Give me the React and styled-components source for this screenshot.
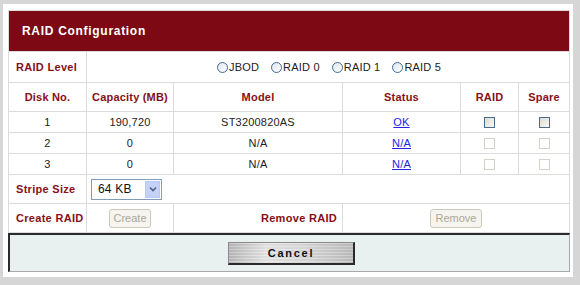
import React from "react";
import styled, { createGlobalStyle } from "styled-components";

const GlobalStyle = createGlobalStyle`
  body {
    margin: 0;
    background: #d6d6d6;
    font-family: "Liberation Sans", Arial, sans-serif;
    font-size: 11px;
    color: #222;
  }
`;

const Panel = styled.div`
  margin: 4px 0 0 3px;
  width: 570px;
  box-sizing: border-box;
  background: #fff;
  padding: 6px 3px 5px 5px;
`;

const Grid = styled.table`
  width: 100%;
  border-collapse: separate;
  border-spacing: 1px;
  background: #dcdcdc;
  table-layout: fixed;
`;

const TitleCell = styled.td`
  height: 40px;
  padding: 0 0 0 13px;
  background: #7c0913;
  color: #fff;
  font-size: 12px;
  font-weight: bold;
  letter-spacing: 0.7px;
`;

const Cell = styled.td`
  height: ${(p) => p.$h || 20}px;
  padding: 0;
  background: #fff;
  text-align: ${(p) => p.$align || "center"};
  vertical-align: middle;
  letter-spacing: 0.2px;
`;

const Label = styled(Cell)`
  padding-left: ${(p) => (p.$align === "right" ? 0 : 7)}px;
  padding-right: ${(p) => (p.$align === "right" ? 5 : 0)}px;
  color: #861019;
  font-weight: bold;
  letter-spacing: 0.3px;
`;

const Head = styled(Cell)`
  color: #861019;
  font-weight: bold;
`;

const Radios = styled.div`
  display: flex;
  justify-content: center;
  gap: 12px;
  padding-left: 2px;
`;

const RadioItem = styled.label`
  display: flex;
  align-items: center;
  gap: 1px;
  color: #222;
`;

const RadioDot = styled.span`
  width: 9px;
  height: 9px;
  border-radius: 50%;
  border: 1px solid #3f6c98;
  background: linear-gradient(135deg, #dfe6ee, #fff);
`;

const Link = styled.a`
  color: #2323e6;
  text-decoration: underline;
`;

const Check = styled.span`
  display: inline-block;
  vertical-align: middle;
  width: 9px;
  height: 9px;
  border: 1px solid ${(p) => (p.$off ? "#d4d2c8" : "#4a6c8c")};
  background: ${(p) =>
    p.$off ? "#fff" : "linear-gradient(135deg, #dcdcd6, #f8f8f6)"};
`;

const SelectBox = styled.div`
  display: flex;
  align-items: center;
  justify-content: space-between;
  width: 71px;
  height: 21px;
  margin-left: 4px;
  box-sizing: border-box;
  border: 1px solid #7f9db9;
  padding: 0 1px 0 6px;
  font-size: 12px;
  color: #111;
`;

const Arrow = styled.span`
  display: flex;
  align-items: center;
  justify-content: center;
  width: 15px;
  height: 17px;
  background: #c4d2f8;
  border: 1px solid #b7c9f1;
  box-sizing: border-box;
`;

const GhostButton = styled.button`
  width: ${(p) => p.$w}px;
  height: 19px;
  padding: 0;
  border: 1px solid #cac8bb;
  border-radius: 3px;
  background: #f5f4ee;
  color: #aca899;
  font-family: inherit;
  font-size: 11px;
`;

const Footer = styled.div`
  display: flex;
  justify-content: center;
  align-items: center;
  height: 39px;
  box-sizing: border-box;
  background: #e9f1f0;
  border-top: 2px solid #2b2b2b;
  border-left: 2px solid #2b2b2b;
  border-right: 1px solid #a9a9a9;
  border-bottom: 1px solid #a9a9a9;
  padding-left: 4px;
`;

const CancelButton = styled.button`
  width: 127px;
  height: 23px;
  padding: 0;
  border: 1px solid #8a8a8a;
  border-right: 2px solid #2a2a2a;
  border-bottom: 2px solid #2a2a2a;
  background: repeating-linear-gradient(
      180deg,
      rgba(255, 255, 255, 0.25) 0 1px,
      rgba(0, 0, 0, 0.03) 1px 3px
    ),
    linear-gradient(90deg, #b9b9b9, #e6e6e6 30%, #dadada 60%, #bdbdbd);
  font-family: inherit;
  font-size: 11px;
  font-weight: bold;
  letter-spacing: 1.7px;
  color: #111;
`;

const disks = [
  { no: 1, cap: "190,720", model: "ST3200820AS", status: "OK", on: true },
  { no: 2, cap: "0", model: "N/A", status: "N/A", on: false },
  { no: 3, cap: "0", model: "N/A", status: "N/A", on: false },
];

const levels = ["JBOD", "RAID 0", "RAID 1", "RAID 5"];

const Chevron = () => (
  <svg width="8" height="6" viewBox="0 0 8 6">
    <path d="M1 1.5 L4 4.5 L7 1.5" fill="none" stroke="#4d6185" strokeWidth="1.6" />
  </svg>
);

export default function App() {
  return (
    <>
      <GlobalStyle />
      <Panel>
        <Grid>
          <colgroup>
            <col style={{ width: 77 }} />
            <col style={{ width: 86 }} />
            <col style={{ width: 168 }} />
            <col style={{ width: 117 }} />
            <col style={{ width: 57 }} />
            <col />
          </colgroup>
          <tbody>
            <tr>
              <TitleCell colSpan={6}>RAID Configuration</TitleCell>
            </tr>
            <tr>
              <Label $h={30} $align="left">RAID Level</Label>
              <Cell colSpan={5}>
                <Radios>
                  {levels.map((l) => (
                    <RadioItem key={l}>
                      <RadioDot />
                      {l}
                    </RadioItem>
                  ))}
                </Radios>
              </Cell>
            </tr>
            <tr>
              <Head $h={28}>Disk No.</Head>
              <Head $h={28}>Capacity (MB)</Head>
              <Head $h={28}>Model</Head>
              <Head $h={28}>Status</Head>
              <Head $h={28}>RAID</Head>
              <Head $h={28}>Spare</Head>
            </tr>
            {disks.map((d) => (
              <tr key={d.no}>
                <Cell>{d.no}</Cell>
                <Cell>{d.cap}</Cell>
                <Cell>{d.model}</Cell>
                <Cell>
                  <Link href="#">{d.status}</Link>
                </Cell>
                <Cell>
                  <Check $off={!d.on} />
                </Cell>
                <Cell>
                  <Check $off={!d.on} />
                </Cell>
              </tr>
            ))}
            <tr>
              <Label $h={28} $align="left">Stripe Size</Label>
              <Cell colSpan={5} $align="left">
                <SelectBox>
                  64 KB
                  <Arrow>
                    <Chevron />
                  </Arrow>
                </SelectBox>
              </Cell>
            </tr>
            <tr>
              <Label $h={28} $align="left">Create RAID</Label>
              <Cell>
                <GhostButton $w={42} disabled>Create</GhostButton>
              </Cell>
              <Label $h={28} $align="right">Remove RAID</Label>
              <Cell colSpan={3}>
                <GhostButton $w={52} disabled>Remove</GhostButton>
              </Cell>
            </tr>
          </tbody>
        </Grid>
        <Footer>
          <CancelButton>Cancel</CancelButton>
        </Footer>
      </Panel>
    </>
  );
}
